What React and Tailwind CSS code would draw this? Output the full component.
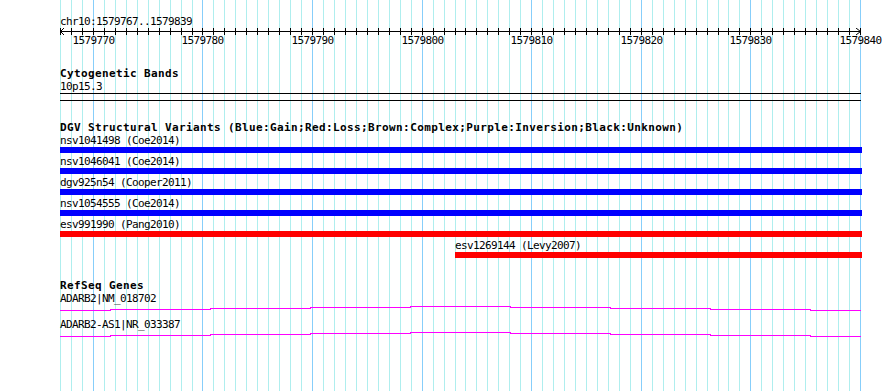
import React from "react";

const START = 1579767;
const SPAN = 73;
const PX = 800 / SPAN;
const gx = (k) => Math.round(60 + k * PX);

const variants = [
  { name: "nsv1041498 (Coe2014)", color: "bg-[#0000ff]" },
  { name: "nsv1046041 (Coe2014)", color: "bg-[#0000ff]" },
  { name: "dgv925n54 (Cooper2011)", color: "bg-[#0000ff]" },
  { name: "nsv1054555 (Coe2014)", color: "bg-[#0000ff]" },
  { name: "esv991990 (Pang2010)", color: "bg-[#ff0000]" },
];

const genes = ["ADARB2|NM_018702", "ADARB2-AS1|NR_033387"];

// intron line, drawn in steps like the original renderer
const steps = [60, 110, 210, 310, 410, 510, 610, 710, 810, 860];
const levels = [5, 4, 3, 2, 1, 2, 3, 4, 5];

const FONT = "'DejaVu Sans Mono', monospace";

const Grid = () => {
  const lines = [];
  for (let k = 0; k <= SPAN; k++) {
    const major = (START + k) % 10 === 0;
    lines.push(
      <rect
        key={k}
        x={gx(k)}
        y={0}
        width={1}
        height={391}
        fill={major ? "#87cefa" : "#afeeee"}
      />
    );
  }
  return (
    <svg className="absolute inset-0" width="890" height="391" shapeRendering="crispEdges">
      {lines}
    </svg>
  );
};

const Ruler = () => {
  const ticks = [];
  const labels = [];
  for (let k = 0; k <= SPAN; k++) {
    ticks.push(<rect key={k} x={gx(k)} y={0} width={1} height={7} fill="#000" />);
    if ((START + k) % 10 === 0) {
      labels.push(
        <text
          key={k}
          x={gx(k) + 0.5}
          y={16}
          textAnchor="middle"
          fontSize="11"
          letterSpacing="-0.62"
          fontFamily={FONT}
          fill="#000"
        >
          {START + k}
        </text>
      );
    }
  }
  return (
    <svg className="block" width="890" height="40">
      <g shapeRendering="crispEdges">
        <rect x={60} y={3} width={801} height={1} fill="#000" />
        {ticks}
      </g>
      <polyline points="64,0 60.5,3.5 64,7" fill="none" stroke="#000" />
      <polyline points="856,0 860.5,3.5 856,7" fill="none" stroke="#000" />
      {labels}
    </svg>
  );
};

const GeneLine = () => (
  <svg className="block" width="890" height="13" shapeRendering="crispEdges">
    {levels.map((y, i) => (
      <rect
        key={i}
        x={steps[i]}
        y={y}
        width={steps[i + 1] - steps[i] + 1}
        height={1}
        fill="#ff00ff"
      />
    ))}
  </svg>
);

const App = () => {
  const label = "ml-[60px] text-[11px] leading-[13px] tracking-[-0.62px] text-black whitespace-nowrap";
  const title = "ml-[60px] text-[11px] leading-[12px] tracking-[0.38px] font-bold text-black whitespace-nowrap";

  return (
    <div className="relative w-[890px] h-[391px] overflow-hidden bg-white font-['DejaVu_Sans_Mono',monospace]">
      <Grid />
      <div className="relative pt-[15px]">
        <div className={label}>chr10:1579767..1579839</div>
        <Ruler />

        <div className={title}>Cytogenetic Bands</div>
        <div className={label}>10p15.3</div>
        <div className="ml-[60px] w-[801px] h-[8px] border-y border-black" />

        <div className={`${title} mt-[20px] leading-[13px]`}>
          DGV Structural Variants (Blue:Gain;Red:Loss;Brown:Complex;Purple:Inversion;Black:Unknown)
        </div>
        {variants.map((v) => (
          <div key={v.name} className="pb-[2px]">
            <div className={label}>{v.name}</div>
            <div className={`ml-[60px] w-[802px] h-[6px] ${v.color}`} />
          </div>
        ))}
        <div>
          <div className="ml-[455px] text-[11px] leading-[13px] tracking-[-0.62px] text-black whitespace-nowrap">
            esv1269144 (Levy2007)
          </div>
          <div className="ml-[455px] w-[407px] h-[6px] bg-[#ff0000]" />
        </div>

        <div className={`${title} mt-[22px]`}>RefSeq Genes</div>
        {genes.map((g) => (
          <div key={g}>
            <div className={`${label} leading-[12px]`}>{g}</div>
            <GeneLine />
          </div>
        ))}
      </div>
    </div>
  );
};

export default App;
